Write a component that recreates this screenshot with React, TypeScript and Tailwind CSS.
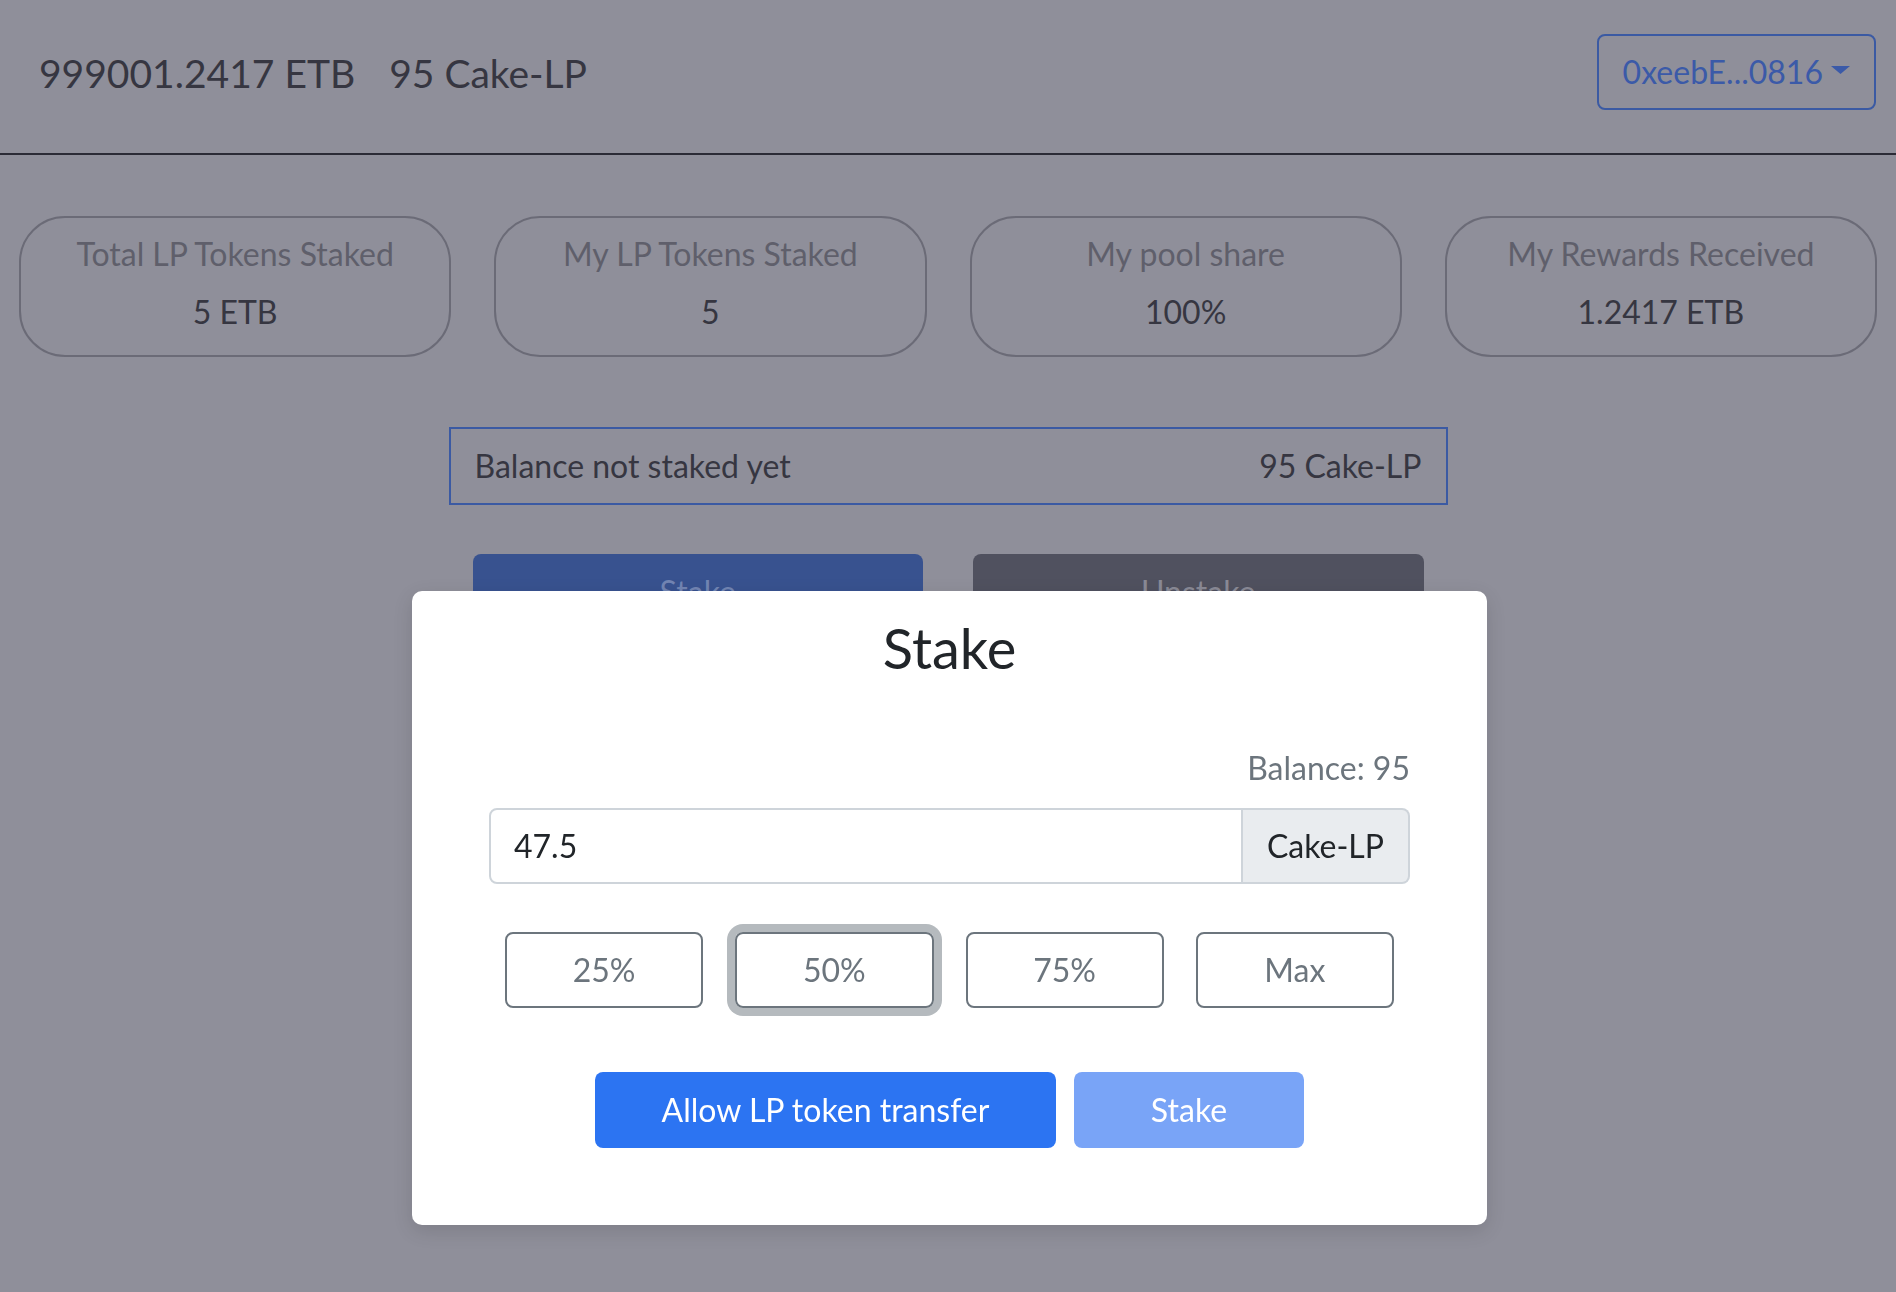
import React from 'react';

const stats = [{
  label: "Total LP Tokens Staked",
  value: "5 ETB"
}, {
  label: "My LP Tokens Staked",
  value: "5"
}, {
  label: "My pool share",
  value: "100%"
}, {
  label: "My Rewards Received",
  value: "1.2417 ETB"
}];

const percents = ["25%", "50%", "75%", "Max"];

const StatCard: React.FC<{ label: string; value: string }> = ({ label, value }) => {
  return <div className="flex h-[141px] flex-col items-center gap-[10px] rounded-[46px] border-2 border-[#6b6b77] pt-[12px] text-[32px] leading-[1.5]">
      <div className="text-[#5f5f6b]">{label}</div>
      <div className="text-[#363641]">{value}</div>
    </div>;
};

const StakeModal: React.FC = () => {
  return <div className="fixed left-[412px] top-[591px] w-[1075px] rounded-[10px] bg-white px-[77px] pb-[77px] pt-[23px] shadow-[0_6px_20px_rgba(0,0,0,0.12)]">
      <h3 className="text-center text-[56px] font-normal leading-[1.2] text-[#212529]">Stake</h3>

      <div className="mt-[63px] text-right text-[32px] leading-[1.5] text-[#6c757d]">Balance: 95</div>

      <div className="mt-[16px] flex h-[76px] text-[32px] leading-[1.5] text-[#212529]">
        <div className="flex flex-1 items-center rounded-l-[8px] border-2 border-[#ced4da] pl-[23px]">47.5</div>
        <div className="flex items-center rounded-r-[8px] border-2 border-l-0 border-[#ced4da] bg-[#e9ecef] px-[24px]">Cake-LP</div>
      </div>

      <div className="mt-[48px] grid grid-cols-4">
        {percents.map((p, i) => <div key={p} className="px-[16px]">
            <button className={"h-[76px] w-full rounded-[8px] border-2 border-[#6c757d] text-[32px] leading-[1.5] text-[#6c757d] " + (i === 1 ? "shadow-[0_0_0_8px_#b5babe]" : "")}>
              {p}
            </button>
          </div>)}
      </div>

      <div className="mt-[64px] flex justify-center gap-[18px] text-[32px] leading-[1.5] text-white">
        <button className="h-[76px] w-[461px] rounded-[8px] bg-[#2c74f2]">Allow LP token transfer</button>
        <button className="h-[76px] w-[230px] rounded-[8px] bg-[#79a4f7]">Stake</button>
      </div>
    </div>;
};

export default function App() {
  return <div className="min-h-screen bg-[#8f8f9a] font-['Lato','Noto_Sans',sans-serif]">
      <header className="flex h-[155px] items-start justify-between border-b-2 border-[#2b2b36] pl-[39px] pr-[20px] pt-[34px]">
        <div className="mt-[16px] flex gap-[34px] text-[39px] leading-[1.2] text-[#363641]">
          <span>999001.2417 ETB</span>
          <span>95 Cake-LP</span>
        </div>
        <button className="flex h-[76px] items-center rounded-[8px] border-2 border-[#3b5aa3] px-[24px] text-[32px] leading-[1.5] text-[#3b5aa8]">
          0xeebE...0816
          <svg className="ml-[8px] mb-[5px]" width="19" height="8" viewBox="0 0 19 8">
            <polygon points="0,0 19,0 9.5,8" fill="#3b5aa8" />
          </svg>
        </button>
      </header>

      <section className="mt-[61px] grid grid-cols-4 gap-[43px] px-[19px]">
        {stats.map(s => <StatCard key={s.label} label={s.label} value={s.value} />)}
      </section>

      <div className="mx-auto mt-[70px] flex w-[999px] justify-between border-2 border-[#3b5aa3] px-[24px] py-[13px] text-[32px] leading-[1.5] text-[#363641]">
        <span>Balance not staked yet</span>
        <span>95 Cake-LP</span>
      </div>

      <div className="mx-auto mt-[49px] flex w-[999px] gap-[50px] px-[24px] text-[32px] leading-[1.5]">
        <button className="h-[76px] flex-1 rounded-[8px] bg-[#38528f] text-[#7285b3]">Stake</button>
        <button className="h-[76px] flex-1 rounded-[8px] bg-[#50515f] text-[#8a8a96]">Unstake</button>
      </div>

      <StakeModal />
    </div>;
}
